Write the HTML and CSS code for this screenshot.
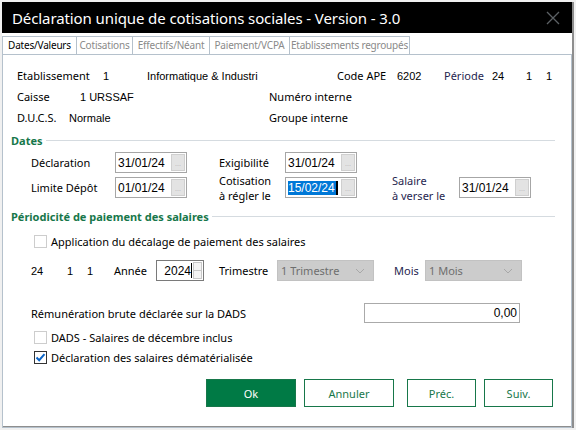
FILE: index.html
```html
<!DOCTYPE html>
<html lang="fr">
<head>
  <meta charset="UTF-8" />
  <title>Déclaration unique de cotisations sociales</title>
  <link rel="stylesheet" href="styles.css">
</head>
<body>
  <div class="window">
    <div class="titlebar">
      <span class="title">Déclaration unique de cotisations sociales - Version - 3.0</span>
      <svg class="close" width="14" height="14" viewBox="0 0 14 14">
        <path d="M1 1 L13 13 M13 1 L1 13" stroke="#5c6165" stroke-width="1.3" fill="none" />
      </svg>
    </div>

    <div class="tabs">
      <div class="tab active t1">Dates/Valeurs</div>
      <div class="tab t2">Cotisations</div>
      <div class="tab t3">Effectifs/Néant</div>
      <div class="tab t4">Paiement/VCPA</div>
      <div class="tab t5">Etablissements regroupés</div>
    </div>

    <div class="panel">
      <div class="info">
        <div class="info-row">
          <span class="lbl w86">Etablissement</span>
          <span class="val w44">1</span>
          <span class="val w190">Informatique &amp; Industri</span>
          <span class="lbl w60">Code APE</span>
          <span class="val w47">6202</span>
          <span class="lbl navy w48">Période</span>
          <span class="val w34">24</span>
          <span class="val w20">1</span>
          <span class="val">1</span>
        </div>
        <div class="info-row">
          <span class="lbl w63">Caisse</span>
          <span class="val w189">1 URSSAF</span>
          <span class="lbl">Numéro interne</span>
        </div>
        <div class="info-row">
          <span class="lbl w52">D.U.C.S.</span>
          <span class="val w200">Normale</span>
          <span class="lbl">Groupe interne</span>
        </div>
      </div>

      <div class="section-title"><span>Dates</span></div>

      <div class="dates">
        <div class="date-row">
          <span class="lbl dl1">Déclaration</span>
          <div class="datebox"><span>31/01/24</span><i>...</i></div>
          <span class="lbl dl2">Exigibilité</span>
          <div class="datebox"><span>31/01/24</span><i>...</i></div>
        </div>
        <div class="date-row">
          <span class="lbl dl1">Limite Dépôt</span>
          <div class="datebox"><span>01/01/24</span><i>...</i></div>
          <span class="lbl dl2 two">Cotisation<br>à régler le</span>
          <div class="datebox"><span class="sel">15/02/24</span><i>...</i></div>
          <span class="lbl dl3 two navy">Salaire<br>à verser le</span>
          <div class="datebox"><span>31/01/24</span><i>...</i></div>
        </div>
      </div>

      <div class="section-title sec2"><span>Périodicité de paiement des salaires</span></div>

      <label class="check first"><span class="box"></span>Application du décalage de paiement des salaires</label>

      <div class="period-row">
        <span class="val w36">24</span>
        <span class="val w20">1</span>
        <span class="val w27">1</span>
        <span class="lbl w42">Année</span>
        <div class="spin"><span>2024</span><i class="caret"></i><b></b></div>
        <span class="lbl w58">Trimestre</span>
        <div class="select s1"><span>1 Trimestre</span><svg width="10" height="6" viewBox="0 0 10 6"><path d="M1 1 L5 5 L9 1" stroke="#a8a8a8" fill="none" /></svg></div>
        <span class="lbl navy w31">Mois</span>
        <div class="select"><span>1 Mois</span><svg width="10" height="6" viewBox="0 0 10 6"><path d="M1 1 L5 5 L9 1" stroke="#a8a8a8" fill="none" /></svg></div>
      </div>

      <div class="remu-row">
        <span class="lbl w333">Rémunération brute déclarée sur la DADS</span>
        <div class="amount">0,00</div>
      </div>

      <label class="check c2"><span class="box"></span>DADS - Salaires de décembre inclus</label>
      <label class="check c3"><span class="box checked">
        <svg width="11" height="11" viewBox="0 0 11 11"><path d="M1.5 5.5 L4.2 8.2 L9.5 2.2" stroke="#0a64c8" stroke-width="2" fill="none" /></svg>
      </span>Déclaration des salaires dématérialisée</label>

      <div class="buttons">
        <button class="btn ok">Ok</button>
        <button class="btn wide">Annuler</button>
        <button class="btn small gap">Préc.</button>
        <button class="btn small">Suiv.</button>
      </div>
    </div>
  </div>
</body>
</html>
```

FILE: styles.css
```css
* { margin: 0; padding: 0; box-sizing: border-box; }

body {
  background: #f0f0f0;
  padding: 2px 0 0 2px;
  font-family: "Noto Sans", sans-serif;
  font-size: 11px;
  color: #000;
}

.window {
  width: 572px;
  height: 426px;
  background: #fff;
  border-right: 2px solid #8e8e8e;
  border-bottom: 2px solid #8e8e8e;
  position: relative;
}

/* barre de titre */
.titlebar {
  height: 31px;
  background: #000;
  display: flex;
  align-items: center;
  justify-content: space-between;
  padding: 0 12px 0 10px;
}

.title {
  color: #fff;
  font-size: 15px;
  letter-spacing: -0.1px;
}

/* onglets */
.tabs {
  display: flex;
  margin-top: 3px;
  padding-left: 1px;
  height: 18px;
}

.tab {
  border: 1px solid #b5c1cc;
  border-bottom: none;
  margin-left: -1px;
  line-height: 17px;
  font-size: 10px;
  letter-spacing: -0.2px;
  text-align: center;
  color: #8a8a8a;
  background: #fff;
  white-space: nowrap;
}

.tab.active { color: #000; }

.t1 { width: 75px; }
.t2 { width: 57px; }
.t3 { width: 78px; }
.t4 { width: 81px; }
.t5 { width: 121px; }

.panel {
  border: 1px solid #b5c1cc;
  height: 374px;
  padding: 10px 16px 0 8px;
}

.lbl { color: #000; white-space: nowrap; }
.navy { color: #1f1f4f; }
.val {
  font-family: "Liberation Sans", Arial, sans-serif;
  font-size: 11px;
  white-space: nowrap;
}

.w20 { width: 20px; } .w27 { width: 27px; } .w31 { width: 31px; }
.w34 { width: 34px; } .w36 { width: 36px; } .w42 { width: 42px; }
.w44 { width: 44px; } .w47 { width: 47px; } .w48 { width: 48px; }
.w52 { width: 52px; } .w58 { width: 58px; } .w60 { width: 60px; }
.w63 { width: 63px; } .w86 { width: 86px; } .w189 { width: 189px; }
.w190 { width: 190px; } .w200 { width: 200px; } .w333 { width: 333px; }

.info { padding-left: 6px; }

.info-row {
  display: flex;
  align-items: center;
  height: 21px;
}

/* titres de section */
.section-title {
  display: flex;
  align-items: center;
  gap: 3px;
  height: 16px;
  margin-top: 4px;
  color: #17774a;
  font-weight: bold;
  font-size: 11px;
}

.section-title::after {
  content: "";
  flex: 1;
  border-top: 1px solid #d5dbe0;
}

.sec2 { margin-top: 10px; }

.dates { padding-left: 20px; margin-top: 4px; }

.date-row {
  display: flex;
  align-items: center;
  height: 21px;
  margin-bottom: 4px;
}

.dl1 { width: 84px; }
.dl2 { width: 66px; margin-left: 32px; }
.dl3 { width: 67px; margin-left: 35px; }
.two { line-height: 15px; }

.datebox {
  width: 72px;
  height: 21px;
  border: 1px solid #a6a6a6;
  display: flex;
  align-items: center;
  justify-content: space-between;
  padding: 0 1px 0 2px;
  font-family: "Liberation Sans", Arial, sans-serif;
  font-size: 12px;
}

.datebox .sel {
  background: #0078d7;
  color: #fff;
  border-right: 2px solid #000;
  padding-right: 1px;
}

.datebox i {
  width: 14px;
  height: 17px;
  background: #e3e3e3;
  border: 1px solid #cfcfcf;
  font-style: normal;
  font-size: 7px;
  color: #b0b0b0;
  text-align: center;
  line-height: 17px;
}

/* cases a cocher */
.check {
  display: flex;
  align-items: center;
  height: 16px;
  padding-left: 23px;
}

.check .box {
  width: 13px;
  height: 13px;
  border: 1px solid #cdcdcd;
  margin-right: 4px;
  display: flex;
  align-items: center;
  justify-content: center;
}

.check .box.checked { border-color: #333; }

.first { margin-top: 9px; }
.c2 { margin-top: 6px; }
.c3 { margin-top: 4px; }

.period-row {
  display: flex;
  align-items: center;
  height: 21px;
  margin-top: 11px;
  padding-left: 20px;
}

.spin {
  width: 48px;
  height: 21px;
  border: 1px solid #7a7a7a;
  margin-right: 15px;
  display: flex;
  align-items: center;
  justify-content: flex-end;
  font-family: "Liberation Sans", Arial, sans-serif;
  font-size: 12px;
}

.spin .caret {
  width: 1px;
  height: 15px;
  background: #000;
  margin-right: 1px;
}

.spin b {
  width: 9px;
  height: 17px;
  border: 1px solid #c8c8c8;
  background: linear-gradient(#f4f4f4 0 48%, #c8c8c8 48% 52%, #f4f4f4 52%);
  margin-right: 1px;
}

.select {
  width: 97px;
  height: 21px;
  background: #cccccc;
  border: 1px solid #c2c2c2;
  display: flex;
  align-items: center;
  justify-content: space-between;
  padding: 0 8px 0 3px;
  color: #6e6e6e;
  font-size: 11px;
}

.s1 { margin-right: 20px; }

.remu-row {
  display: flex;
  align-items: center;
  height: 20px;
  margin-top: 22px;
  padding-left: 20px;
}

.amount {
  width: 156px;
  height: 20px;
  border: 1px solid #aaaaaa;
  text-align: right;
  padding-right: 2px;
  line-height: 18px;
  font-family: "Liberation Sans", Arial, sans-serif;
  font-size: 12px;
}

/* boutons */
.buttons {
  display: flex;
  justify-content: flex-end;
  gap: 8px;
  margin-top: 14px;
  padding-right: 2px;
}

.btn {
  height: 28px;
  width: 69px;
  background: #fff;
  border: 1px solid #17774a;
  color: #17774a;
  font-family: "Noto Sans", sans-serif;
  font-size: 11px;
}

.btn.ok, .btn.wide { width: 90px; }
.btn.ok { background: #007a45; color: #fff; }
.btn.gap { margin-left: 5px; }
```
